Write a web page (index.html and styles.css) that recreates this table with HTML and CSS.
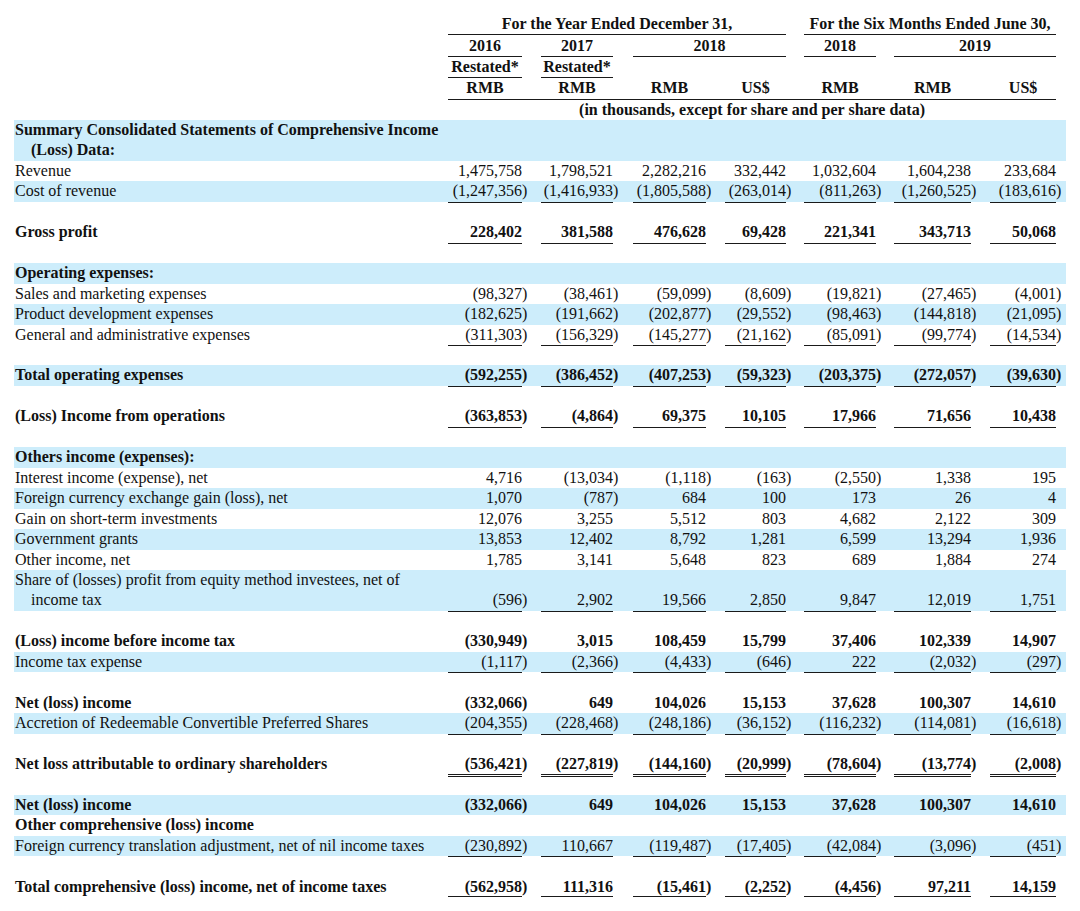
FILE: index.html
```html
<!DOCTYPE html>
<html lang="en">
<head>
<meta charset="utf-8">
<title>Summary Consolidated Statements of Comprehensive Income</title>
<link rel="stylesheet" href="styles.css">
</head>
<body>
<div class="page">
<table class="fs">
<colgroup>
<col class="w-lab"><col class="w1"><col class="w2"><col class="w3"><col class="w4"><col class="w5"><col class="w6"><col class="w7">
</colgroup>
<tbody>
<tr class="h h1"><td></td><td class="c1" colspan="4"><div class="u">For the Year Ended December 31,</div></td><td class="c5 end" colspan="3"><div class="u">For the Six Months Ended June 30,</div></td></tr>
<tr class="h h2"><td></td><td class="c1"><div class="u">2016</div></td><td class="c2"><div class="u">2017</div></td><td class="c3" colspan="2"><div class="u">2018</div></td><td class="c5"><div class="u">2018</div></td><td class="c6 end" colspan="2"><div class="u">2019</div></td></tr>
<tr class="h h3"><td></td><td class="c1"><div class="u">Restated*</div></td><td class="c2"><div class="u">Restated*</div></td><td class="c3"></td><td class="c4"></td><td class="c5"></td><td class="c6"></td><td class="c7 end"></td></tr>
<tr class="h h4"><td></td><td class="c1"><div class="t">RMB</div></td><td class="c2"><div class="t">RMB</div></td><td class="c3"><div class="t">RMB</div></td><td class="c4"><div class="t">US$</div></td><td class="c5"><div class="t">RMB</div></td><td class="c6"><div class="t">RMB</div></td><td class="c7 end"><div class="t">US$</div></td></tr>
<tr class="h h5"><td></td><td class="c1 end" colspan="7"><div class="note">(in thousands, except for share and per share data)</div></td></tr>

<tr class="r b bold"><td class="lab">Summary Consolidated Statements of Comprehensive Income</td><td class="c1"></td><td class="c2"></td><td class="c3"></td><td class="c4"></td><td class="c5"></td><td class="c6"></td><td class="c7 end"></td></tr>
<tr class="r b bold"><td class="lab sub">(Loss) Data:</td><td class="c1"></td><td class="c2"></td><td class="c3"></td><td class="c4"></td><td class="c5"></td><td class="c6"></td><td class="c7 end"></td></tr>
<tr class="r"><td class="lab">Revenue</td><td class="c1"><div class="v">1,475,758</div></td><td class="c2"><div class="v">1,798,521</div></td><td class="c3"><div class="v">2,282,216</div></td><td class="c4"><div class="v">332,442</div></td><td class="c5"><div class="v">1,032,604</div></td><td class="c6"><div class="v">1,604,238</div></td><td class="c7 end"><div class="v">233,684</div></td></tr>
<tr class="r b ul"><td class="lab">Cost of revenue</td><td class="c1"><div class="v">(1,247,356<span class="p">)</span></div></td><td class="c2"><div class="v">(1,416,933<span class="p">)</span></div></td><td class="c3"><div class="v">(1,805,588<span class="p">)</span></div></td><td class="c4"><div class="v">(263,014<span class="p">)</span></div></td><td class="c5"><div class="v">(811,263<span class="p">)</span></div></td><td class="c6"><div class="v">(1,260,525<span class="p">)</span></div></td><td class="c7 end"><div class="v">(183,616<span class="p">)</span></div></td></tr>
<tr class="r"><td class="lab" colspan="8"></td></tr>
<tr class="r bold ul"><td class="lab">Gross profit</td><td class="c1"><div class="v">228,402</div></td><td class="c2"><div class="v">381,588</div></td><td class="c3"><div class="v">476,628</div></td><td class="c4"><div class="v">69,428</div></td><td class="c5"><div class="v">221,341</div></td><td class="c6"><div class="v">343,713</div></td><td class="c7 end"><div class="v">50,068</div></td></tr>
<tr class="r"><td class="lab" colspan="8"></td></tr>
<tr class="r b bold"><td class="lab">Operating expenses:</td><td class="c1"></td><td class="c2"></td><td class="c3"></td><td class="c4"></td><td class="c5"></td><td class="c6"></td><td class="c7 end"></td></tr>
<tr class="r"><td class="lab">Sales and marketing expenses</td><td class="c1"><div class="v">(98,327<span class="p">)</span></div></td><td class="c2"><div class="v">(38,461<span class="p">)</span></div></td><td class="c3"><div class="v">(59,099<span class="p">)</span></div></td><td class="c4"><div class="v">(8,609<span class="p">)</span></div></td><td class="c5"><div class="v">(19,821<span class="p">)</span></div></td><td class="c6"><div class="v">(27,465<span class="p">)</span></div></td><td class="c7 end"><div class="v">(4,001<span class="p">)</span></div></td></tr>
<tr class="r b"><td class="lab">Product development expenses</td><td class="c1"><div class="v">(182,625<span class="p">)</span></div></td><td class="c2"><div class="v">(191,662<span class="p">)</span></div></td><td class="c3"><div class="v">(202,877<span class="p">)</span></div></td><td class="c4"><div class="v">(29,552<span class="p">)</span></div></td><td class="c5"><div class="v">(98,463<span class="p">)</span></div></td><td class="c6"><div class="v">(144,818<span class="p">)</span></div></td><td class="c7 end"><div class="v">(21,095<span class="p">)</span></div></td></tr>
<tr class="r ul"><td class="lab">General and administrative expenses</td><td class="c1"><div class="v">(311,303<span class="p">)</span></div></td><td class="c2"><div class="v">(156,329<span class="p">)</span></div></td><td class="c3"><div class="v">(145,277<span class="p">)</span></div></td><td class="c4"><div class="v">(21,162<span class="p">)</span></div></td><td class="c5"><div class="v">(85,091<span class="p">)</span></div></td><td class="c6"><div class="v">(99,774<span class="p">)</span></div></td><td class="c7 end"><div class="v">(14,534<span class="p">)</span></div></td></tr>
<tr class="r"><td class="lab" colspan="8"></td></tr>
<tr class="r b bold ul"><td class="lab">Total operating expenses</td><td class="c1"><div class="v">(592,255<span class="p">)</span></div></td><td class="c2"><div class="v">(386,452<span class="p">)</span></div></td><td class="c3"><div class="v">(407,253<span class="p">)</span></div></td><td class="c4"><div class="v">(59,323<span class="p">)</span></div></td><td class="c5"><div class="v">(203,375<span class="p">)</span></div></td><td class="c6"><div class="v">(272,057<span class="p">)</span></div></td><td class="c7 end"><div class="v">(39,630<span class="p">)</span></div></td></tr>
<tr class="r"><td class="lab" colspan="8"></td></tr>
<tr class="r bold ul"><td class="lab">(Loss) Income from operations</td><td class="c1"><div class="v">(363,853<span class="p">)</span></div></td><td class="c2"><div class="v">(4,864<span class="p">)</span></div></td><td class="c3"><div class="v">69,375</div></td><td class="c4"><div class="v">10,105</div></td><td class="c5"><div class="v">17,966</div></td><td class="c6"><div class="v">71,656</div></td><td class="c7 end"><div class="v">10,438</div></td></tr>
<tr class="r"><td class="lab" colspan="8"></td></tr>
<tr class="r b bold"><td class="lab">Others income (expenses):</td><td class="c1"></td><td class="c2"></td><td class="c3"></td><td class="c4"></td><td class="c5"></td><td class="c6"></td><td class="c7 end"></td></tr>
<tr class="r"><td class="lab">Interest income (expense), net</td><td class="c1"><div class="v">4,716</div></td><td class="c2"><div class="v">(13,034<span class="p">)</span></div></td><td class="c3"><div class="v">(1,118<span class="p">)</span></div></td><td class="c4"><div class="v">(163<span class="p">)</span></div></td><td class="c5"><div class="v">(2,550<span class="p">)</span></div></td><td class="c6"><div class="v">1,338</div></td><td class="c7 end"><div class="v">195</div></td></tr>
<tr class="r b"><td class="lab">Foreign currency exchange gain (loss), net</td><td class="c1"><div class="v">1,070</div></td><td class="c2"><div class="v">(787<span class="p">)</span></div></td><td class="c3"><div class="v">684</div></td><td class="c4"><div class="v">100</div></td><td class="c5"><div class="v">173</div></td><td class="c6"><div class="v">26</div></td><td class="c7 end"><div class="v">4</div></td></tr>
<tr class="r"><td class="lab">Gain on short-term investments</td><td class="c1"><div class="v">12,076</div></td><td class="c2"><div class="v">3,255</div></td><td class="c3"><div class="v">5,512</div></td><td class="c4"><div class="v">803</div></td><td class="c5"><div class="v">4,682</div></td><td class="c6"><div class="v">2,122</div></td><td class="c7 end"><div class="v">309</div></td></tr>
<tr class="r b"><td class="lab">Government grants</td><td class="c1"><div class="v">13,853</div></td><td class="c2"><div class="v">12,402</div></td><td class="c3"><div class="v">8,792</div></td><td class="c4"><div class="v">1,281</div></td><td class="c5"><div class="v">6,599</div></td><td class="c6"><div class="v">13,294</div></td><td class="c7 end"><div class="v">1,936</div></td></tr>
<tr class="r"><td class="lab">Other income, net</td><td class="c1"><div class="v">1,785</div></td><td class="c2"><div class="v">3,141</div></td><td class="c3"><div class="v">5,648</div></td><td class="c4"><div class="v">823</div></td><td class="c5"><div class="v">689</div></td><td class="c6"><div class="v">1,884</div></td><td class="c7 end"><div class="v">274</div></td></tr>
<tr class="r b"><td class="lab">Share of (losses) profit from equity method investees, net of</td><td class="c1"></td><td class="c2"></td><td class="c3"></td><td class="c4"></td><td class="c5"></td><td class="c6"></td><td class="c7 end"></td></tr>
<tr class="r b ul"><td class="lab sub">income tax</td><td class="c1"><div class="v">(596<span class="p">)</span></div></td><td class="c2"><div class="v">2,902</div></td><td class="c3"><div class="v">19,566</div></td><td class="c4"><div class="v">2,850</div></td><td class="c5"><div class="v">9,847</div></td><td class="c6"><div class="v">12,019</div></td><td class="c7 end"><div class="v">1,751</div></td></tr>
<tr class="r"><td class="lab" colspan="8"></td></tr>
<tr class="r bold"><td class="lab">(Loss) income before income tax</td><td class="c1"><div class="v">(330,949<span class="p">)</span></div></td><td class="c2"><div class="v">3,015</div></td><td class="c3"><div class="v">108,459</div></td><td class="c4"><div class="v">15,799</div></td><td class="c5"><div class="v">37,406</div></td><td class="c6"><div class="v">102,339</div></td><td class="c7 end"><div class="v">14,907</div></td></tr>
<tr class="r b ul"><td class="lab">Income tax expense</td><td class="c1"><div class="v">(1,117<span class="p">)</span></div></td><td class="c2"><div class="v">(2,366<span class="p">)</span></div></td><td class="c3"><div class="v">(4,433<span class="p">)</span></div></td><td class="c4"><div class="v">(646<span class="p">)</span></div></td><td class="c5"><div class="v">222</div></td><td class="c6"><div class="v">(2,032<span class="p">)</span></div></td><td class="c7 end"><div class="v">(297<span class="p">)</span></div></td></tr>
<tr class="r"><td class="lab" colspan="8"></td></tr>
<tr class="r bold"><td class="lab">Net (loss) income</td><td class="c1"><div class="v">(332,066<span class="p">)</span></div></td><td class="c2"><div class="v">649</div></td><td class="c3"><div class="v">104,026</div></td><td class="c4"><div class="v">15,153</div></td><td class="c5"><div class="v">37,628</div></td><td class="c6"><div class="v">100,307</div></td><td class="c7 end"><div class="v">14,610</div></td></tr>
<tr class="r b ul"><td class="lab">Accretion of Redeemable Convertible Preferred Shares</td><td class="c1"><div class="v">(204,355<span class="p">)</span></div></td><td class="c2"><div class="v">(228,468<span class="p">)</span></div></td><td class="c3"><div class="v">(248,186<span class="p">)</span></div></td><td class="c4"><div class="v">(36,152<span class="p">)</span></div></td><td class="c5"><div class="v">(116,232<span class="p">)</span></div></td><td class="c6"><div class="v">(114,081<span class="p">)</span></div></td><td class="c7 end"><div class="v">(16,618<span class="p">)</span></div></td></tr>
<tr class="r"><td class="lab" colspan="8"></td></tr>
<tr class="r bold dbl"><td class="lab">Net loss attributable to ordinary shareholders</td><td class="c1"><div class="v">(536,421<span class="p">)</span></div></td><td class="c2"><div class="v">(227,819<span class="p">)</span></div></td><td class="c3"><div class="v">(144,160<span class="p">)</span></div></td><td class="c4"><div class="v">(20,999<span class="p">)</span></div></td><td class="c5"><div class="v">(78,604<span class="p">)</span></div></td><td class="c6"><div class="v">(13,774<span class="p">)</span></div></td><td class="c7 end"><div class="v">(2,008<span class="p">)</span></div></td></tr>
<tr class="r"><td class="lab" colspan="8"></td></tr>
<tr class="r b bold"><td class="lab">Net (loss) income</td><td class="c1"><div class="v">(332,066<span class="p">)</span></div></td><td class="c2"><div class="v">649</div></td><td class="c3"><div class="v">104,026</div></td><td class="c4"><div class="v">15,153</div></td><td class="c5"><div class="v">37,628</div></td><td class="c6"><div class="v">100,307</div></td><td class="c7 end"><div class="v">14,610</div></td></tr>
<tr class="r bold"><td class="lab">Other comprehensive (loss) income</td><td class="c1"></td><td class="c2"></td><td class="c3"></td><td class="c4"></td><td class="c5"></td><td class="c6"></td><td class="c7 end"></td></tr>
<tr class="r b ul"><td class="lab">Foreign currency translation adjustment, net of nil income taxes</td><td class="c1"><div class="v">(230,892<span class="p">)</span></div></td><td class="c2"><div class="v">110,667</div></td><td class="c3"><div class="v">(119,487<span class="p">)</span></div></td><td class="c4"><div class="v">(17,405<span class="p">)</span></div></td><td class="c5"><div class="v">(42,084<span class="p">)</span></div></td><td class="c6"><div class="v">(3,096<span class="p">)</span></div></td><td class="c7 end"><div class="v">(451<span class="p">)</span></div></td></tr>
<tr class="r"><td class="lab" colspan="8"></td></tr>
<tr class="r bold dbl"><td class="lab">Total comprehensive (loss) income, net of income taxes</td><td class="c1"><div class="v">(562,958<span class="p">)</span></div></td><td class="c2"><div class="v">111,316</div></td><td class="c3"><div class="v">(15,461<span class="p">)</span></div></td><td class="c4"><div class="v">(2,252<span class="p">)</span></div></td><td class="c5"><div class="v">(4,456<span class="p">)</span></div></td><td class="c6"><div class="v">97,211</div></td><td class="c7 end"><div class="v">14,159</div></td></tr>
</tbody>
</table>
</div>
</body>
</html>
```

FILE: styles.css
```css
* { box-sizing: border-box; }

html, body {
  margin: 0;
  padding: 0;
  background: #ffffff;
}

body {
  color: #111111;
  font-family: "Liberation Serif", "Times New Roman", serif;
  font-size: 16px;
}

.page {
  padding: 13px 0 0 14px;
}

.fs {
  border-collapse: collapse;
  border-spacing: 0;
  table-layout: fixed;
  width: 1052px;
}

.w-lab { width: 415px; }
.w1 { width: 93px; }
.w2 { width: 91px; }
.w3 { width: 93px; }
.w4 { width: 80px; }
.w5 { width: 90px; }
.w6 { width: 95px; }
.w7 { width: 95px; }

.fs td {
  padding: 0;
  white-space: nowrap;
  vertical-align: top;
}

.fs td.c1 { padding-left: 19px; }
.fs td.c2 { padding-left: 19px; }
.fs td.c3 { padding-left: 20px; }
.fs td.c4 { padding-left: 19px; }
.fs td.c5 { padding-left: 18px; }
.fs td.c6 { padding-left: 18px; }
.fs td.c7 { padding-left: 19px; }
.fs td.end { padding-right: 10px; }

/* header */
.h td {
  vertical-align: bottom;
  font-weight: bold;
  text-align: center;
}
.h1 td { height: 22px; }
.h2 td { height: 22px; }
.h3 td { height: 21px; }
.h4 td { height: 21px; }
.h5 td { height: 21px; }

.u {
  line-height: 20px;
  border-bottom: 1px solid #1a1a1a;
}
.t {
  line-height: 20px;
  padding-bottom: 1px;
}
.note {
  line-height: 20px;
  border-top: 1px solid #1a1a1a;
}

/* body rows */
.r td {
  height: 20.46px;
}
.lab {
  padding-left: 1px !important;
  line-height: 20.46px;
  overflow: visible;
}
.lab.sub {
  padding-left: 17px !important;
}

.b td {
  background: #cdedfb;
}

.bold td {
  font-weight: bold;
}

.v {
  height: 20.46px;
  line-height: 20.46px;
  text-align: right;
}

.p {
  margin-right: -0.333em;
}

.ul .v {
  height: 21.46px;
  margin-bottom: -1px;
  border-bottom: 1px solid #1a1a1a;
}

.dbl .v {
  height: 22.46px;
  margin-bottom: -2px;
  border-bottom: 3px double #1a1a1a;
}
```
